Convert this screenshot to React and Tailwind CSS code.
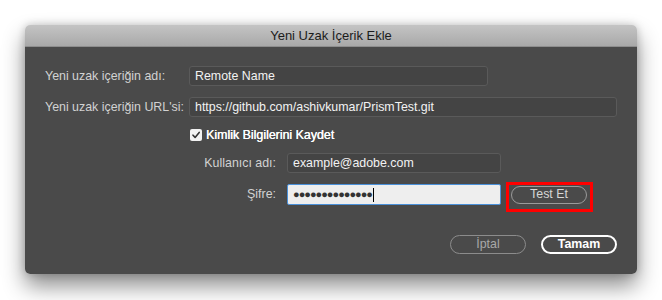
import React from "react";

export default function App() {
  return (
    <div
      className="w-[662px] h-[300px] bg-white pt-[25px] pl-[25px] overflow-hidden"
      style={{ fontFamily: '"Liberation Sans", Arial, sans-serif' }}
    >
      <div className="w-[612px] h-[249px] rounded-[5px] overflow-hidden flex flex-col shadow-[0_12px_22px_rgba(0,0,0,0.45),0_0_8px_rgba(0,0,0,0.2)]">
        <div className="h-[22px] shrink-0 bg-gradient-to-b from-[#c4c4c4] to-[#a9a9a9] border-b border-[#8e8e8e] flex items-center justify-center text-[13px] text-[#1c1c1c]">
          Yeni Uzak İçerik Ekle
        </div>
        <div className="flex-1 bg-[#4a4a4a] pl-[20px] pr-[20px] pt-[19px] text-[12.4px]">
          <div className="flex items-center h-[20px]">
            <div className="w-[144px] text-[#d2d2d2]">Yeni uzak içeriğin adı:</div>
            <div className="w-[299px] h-[20px] bg-[#444444] border border-[#5a5a5a] rounded-[3px] flex items-center pl-[5px] text-[#f2f2f2]">
              Remote Name
            </div>
          </div>
          <div className="flex items-center h-[20px] mt-[11px]">
            <div className="w-[144px] text-[#d2d2d2]">Yeni uzak içeriğin URL'si:</div>
            <div className="w-[428px] h-[20px] bg-[#444444] border border-[#5a5a5a] rounded-[3px] flex items-center pl-[5px] text-[#f2f2f2]">
              https://github.com/ashivkumar/PrismTest.git
            </div>
          </div>
          <div className="flex items-center h-[12px] mt-[12px] ml-[145px]">
            <div className="w-[12px] h-[12px] bg-[#f2f2f2] rounded-[2px] flex items-center justify-center">
              <svg width="10" height="10" viewBox="0 0 10 10">
                <path d="M2 5.2 L4.1 7.4 L8.2 2.4" fill="none" stroke="#333" strokeWidth="1.6" strokeLinecap="round" strokeLinejoin="round" />
              </svg>
            </div>
            <div className="ml-[4px] text-white [text-shadow:0.3px_0_0_#ffffff]">Kimlik Bilgilerini Kaydet</div>
          </div>
          <div className="flex items-center h-[20px] mt-[12px]">
            <div className="w-[231px] text-right text-[#d2d2d2]">Kullanıcı adı:</div>
            <div className="ml-[11px] w-[214px] h-[20px] bg-[#444444] border border-[#5a5a5a] rounded-[3px] flex items-center pl-[5px] text-[#f2f2f2]">
              example@adobe.com
            </div>
          </div>
          <div className="flex items-center h-[21px] mt-[11px]">
            <div className="w-[231px] text-right text-[#d2d2d2]">Şifre:</div>
            <div className="ml-[11px] w-[214px] h-[21px] bg-[#eeeeee] border-[1.5px] border-[#4a90d9] rounded-[2px] flex items-center pl-[5px] text-[#333]">
              <span className="tracking-[-1px] text-[11px] leading-none">●●●●●●●●●●●●●●</span>
              <span className="ml-[1px] w-px h-[14px] bg-black" />
            </div>
            <div className="relative ml-[10px]">
              <div className="w-[76px] h-[18px] rounded-full border border-[#9a9a9a] flex items-center justify-center text-[#d6d6d6]">
                Test Et
              </div>
              <div className="absolute -left-[5px] -top-[4px] w-[87px] h-[30px] border-[3px] border-[#ff0000]" />
            </div>
          </div>
          <div className="flex justify-end gap-[15px] mt-[30px]">
            <div className="w-[76px] h-[19px] rounded-full border border-[#8c8c8c] flex items-center justify-center text-[#a8a8a8]">
              İptal
            </div>
            <div className="w-[76px] h-[19px] rounded-full border-2 border-white flex items-center justify-center text-white font-bold">
              Tamam
            </div>
          </div>
        </div>
      </div>
    </div>
  );
}
